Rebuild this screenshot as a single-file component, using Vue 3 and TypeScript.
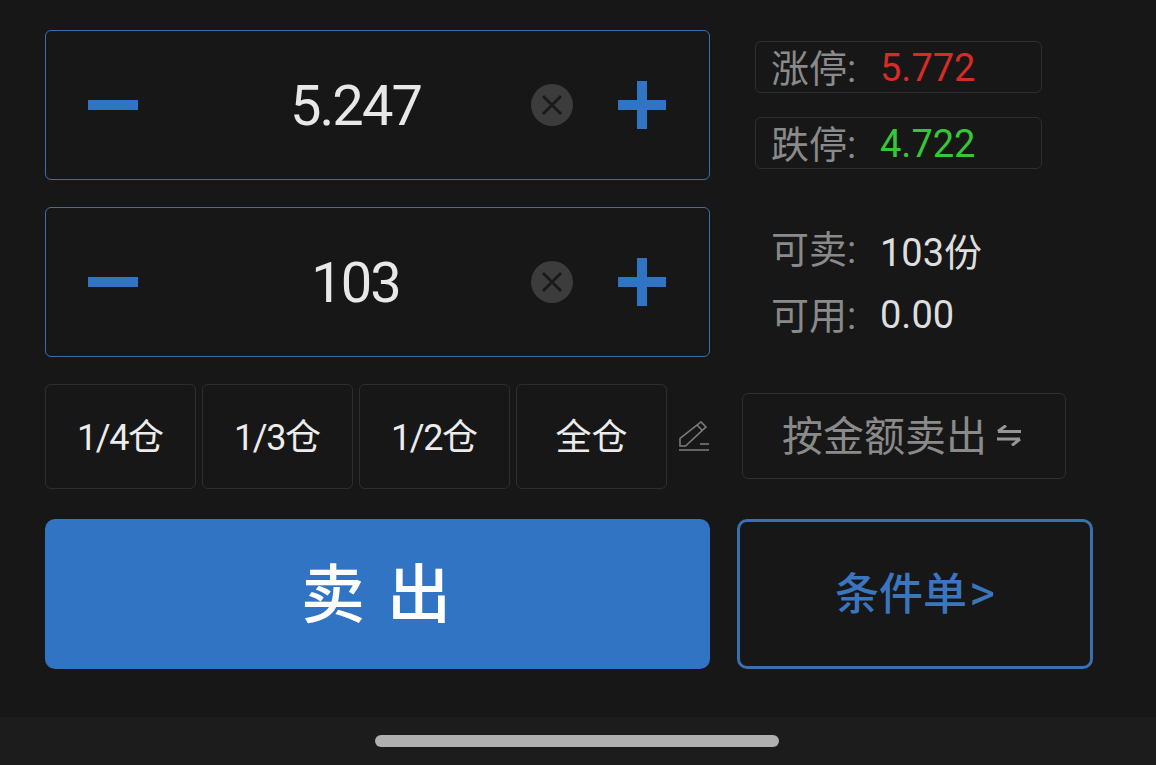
<template>
  <div class="page">
    <div class="panel">
      <div class="top">
        <div class="steppers">
          <div v-for="s in steppers" :key="s" class="stepper">
            <svg class="minus" viewBox="0 0 50 10"><rect width="50" height="10" fill="#3174c4" /></svg>
            <div class="value">{{ s }}</div>
            <svg class="clear" viewBox="0 0 42 42">
              <circle cx="21" cy="21" r="21" fill="#3c3c3c" />
              <path d="M12 12 L30 30 M30 12 L12 30" stroke="#1a1a1a" stroke-width="3" fill="none" />
            </svg>
            <svg class="plus" viewBox="0 0 48 48">
              <path d="M0 19 H19 V0 H29 V19 H48 V29 H29 V48 H19 V29 H0 Z" fill="#3174c4" />
            </svg>
          </div>
        </div>

        <div class="info">
          <div class="limit">
            <span class="label">涨停:</span>
            <span class="num up">5.772</span>
          </div>
          <div class="limit second">
            <span class="label">跌停:</span>
            <span class="num down">4.722</span>
          </div>
          <div class="stat first">
            <span class="label">可卖:</span>
            <span class="num light">103份</span>
          </div>
          <div class="stat">
            <span class="label">可用:</span>
            <span class="num light">0.00</span>
          </div>
        </div>
      </div>

      <div class="middle">
        <div class="quick">
          <button v-for="q in quicks" :key="q.unit + q.frac" class="quick-btn" type="button">
            <span class="frac">{{ q.frac }}</span>{{ q.unit }}
          </button>
        </div>
        <svg class="edit" viewBox="0 0 31 31">
          <path d="M1 25 V17.3 L22 0.9 L27 5.9 L6.6 25 Z" fill="none" stroke="#7d7d7d" stroke-width="1.5" />
          <path d="M18 4 L23.5 9.5" stroke="#7d7d7d" stroke-width="1.5" />
          <path d="M21 23 H30 M0 29 H30" stroke="#7d7d7d" stroke-width="1.5" />
        </svg>
        <button class="mode" type="button">
          按金额卖出
          <svg class="swap" viewBox="0 0 24 21">
            <path d="M1 6.5 H24 M1 6.5 L9 0.5 M23 14 H0 M23 14 L15 20.5" fill="none" stroke="#969696" stroke-width="3" />
          </svg>
        </button>
      </div>

      <div class="bottom">
        <button class="sell" type="button">卖 出</button>
        <button class="cond" type="button">条件单<span class="chevron">&gt;</span></button>
      </div>
    </div>

    <div class="home-bar">
      <div class="home-pill"></div>
    </div>
  </div>
</template>

<script setup lang="ts">
const steppers: string[] = ['5.247', '103'];
const quicks: { frac: string; unit: string }[] = [
  { frac: '1/4', unit: '仓' },
  { frac: '1/3', unit: '仓' },
  { frac: '1/2', unit: '仓' },
  { frac: '', unit: '全仓' },
];
</script>

<style>
html,
body {
  margin: 0;
  background: #171717;
}
</style>

<style scoped>
.page {
  width: 1156px;
  height: 765px;
  display: flex;
  flex-direction: column;
  background: #171717;
  font-family: Roboto, "Noto Sans CJK SC", sans-serif;
  overflow: hidden;
}

.panel {
  flex: 1;
  padding: 30px 0 0 45px;
  display: flex;
  flex-direction: column;
}

.top {
  display: flex;
}

.steppers {
  width: 665px;
  display: flex;
  flex-direction: column;
  gap: 27px;
}

.stepper {
  height: 150px;
  box-sizing: border-box;
  border: 1px solid #3f6da8;
  border-radius: 6px;
  display: flex;
  align-items: center;
  padding: 0 43px 0 42px;
}

.minus {
  width: 50px;
  height: 10px;
  flex-shrink: 0;
}

.plus {
  width: 48px;
  height: 48px;
  margin-left: 45px;
  flex-shrink: 0;
}

.value {
  flex: 1;
  text-align: center;
  font-size: 56px;
  font-weight: 400;
  letter-spacing: -1.9px;
  color: #e8e8e8;
  padding-left: 42px;
  padding-top: 2px;
}

.clear {
  width: 42px;
  height: 42px;
  flex-shrink: 0;
}

.info {
  margin-left: 45px;
  padding-top: 11px;
  display: flex;
  flex-direction: column;
}

.limit {
  width: 287px;
  height: 52px;
  box-sizing: border-box;
  border: 1px solid #2e2e2e;
  border-radius: 6px;
  display: flex;
  align-items: center;
  padding-left: 15px;
  font-size: 38px;
}

.second {
  margin-top: 24px;
}

.stat {
  display: flex;
  align-items: center;
  height: 52px;
  padding-left: 16px;
  margin-top: 14px;
  font-size: 38px;
}

.first {
  margin-top: 53px;
}

.label {
  width: 109px;
  margin-bottom: 4px;
  color: #8a8a8a;
  flex-shrink: 0;
}

.num {
  margin-top: 2px;
}

.up {
  color: #d92b26;
}

.down {
  color: #35c738;
}

.light {
  color: #dedede;
}

.middle {
  margin-top: 27px;
  display: flex;
  align-items: center;
}

.quick {
  display: flex;
  gap: 6px;
}

.quick-btn {
  width: 151px;
  height: 105px;
  box-sizing: border-box;
  background: transparent;
  border: 1px solid #2e2e2e;
  border-radius: 6px;
  color: #ececec;
  font-family: inherit;
  font-size: 36px;
  padding: 0 0 6px;
}

.frac {
  letter-spacing: -1.4px;
}

.edit {
  width: 31px;
  height: 31px;
  margin-left: 12px;
}

.mode {
  margin-left: 32px;
  margin-bottom: 2px;
  width: 324px;
  height: 86px;
  box-sizing: border-box;
  background: transparent;
  border: 1px solid #2e2e2e;
  border-radius: 6px;
  color: #8a8a8a;
  font-family: inherit;
  font-size: 41px;
  padding: 0 5px 6px 0;
  display: flex;
  align-items: center;
  justify-content: center;
  gap: 10px;
}

.swap {
  width: 24px;
  height: 21px;
  margin-top: 5px;
}

.bottom {
  margin-top: 30px;
  display: flex;
  gap: 27px;
}

.sell {
  width: 665px;
  height: 150px;
  background: #3174c4;
  border: none;
  border-radius: 10px;
  color: #fff;
  font-family: inherit;
  font-size: 64px;
  font-weight: 500;
  letter-spacing: 3px;
  padding: 0 0 10px;
}

.cond {
  width: 356px;
  height: 150px;
  box-sizing: border-box;
  background: transparent;
  border: 3px solid #3a6fb0;
  border-radius: 10px;
  color: #3a75bd;
  font-family: inherit;
  font-size: 44px;
  font-weight: 500;
  padding: 0 0 6px;
}

.chevron {
  font-size: 50px;
  font-weight: 400;
  line-height: 1;
  margin-left: 2px;
}

.home-bar {
  height: 48px;
  background: #1c1c1c;
  display: flex;
  align-items: center;
  justify-content: center;
}

.home-pill {
  width: 404px;
  height: 12px;
  margin-right: 2px;
  border-radius: 6px;
  background: #b0b0b0;
}
</style>
